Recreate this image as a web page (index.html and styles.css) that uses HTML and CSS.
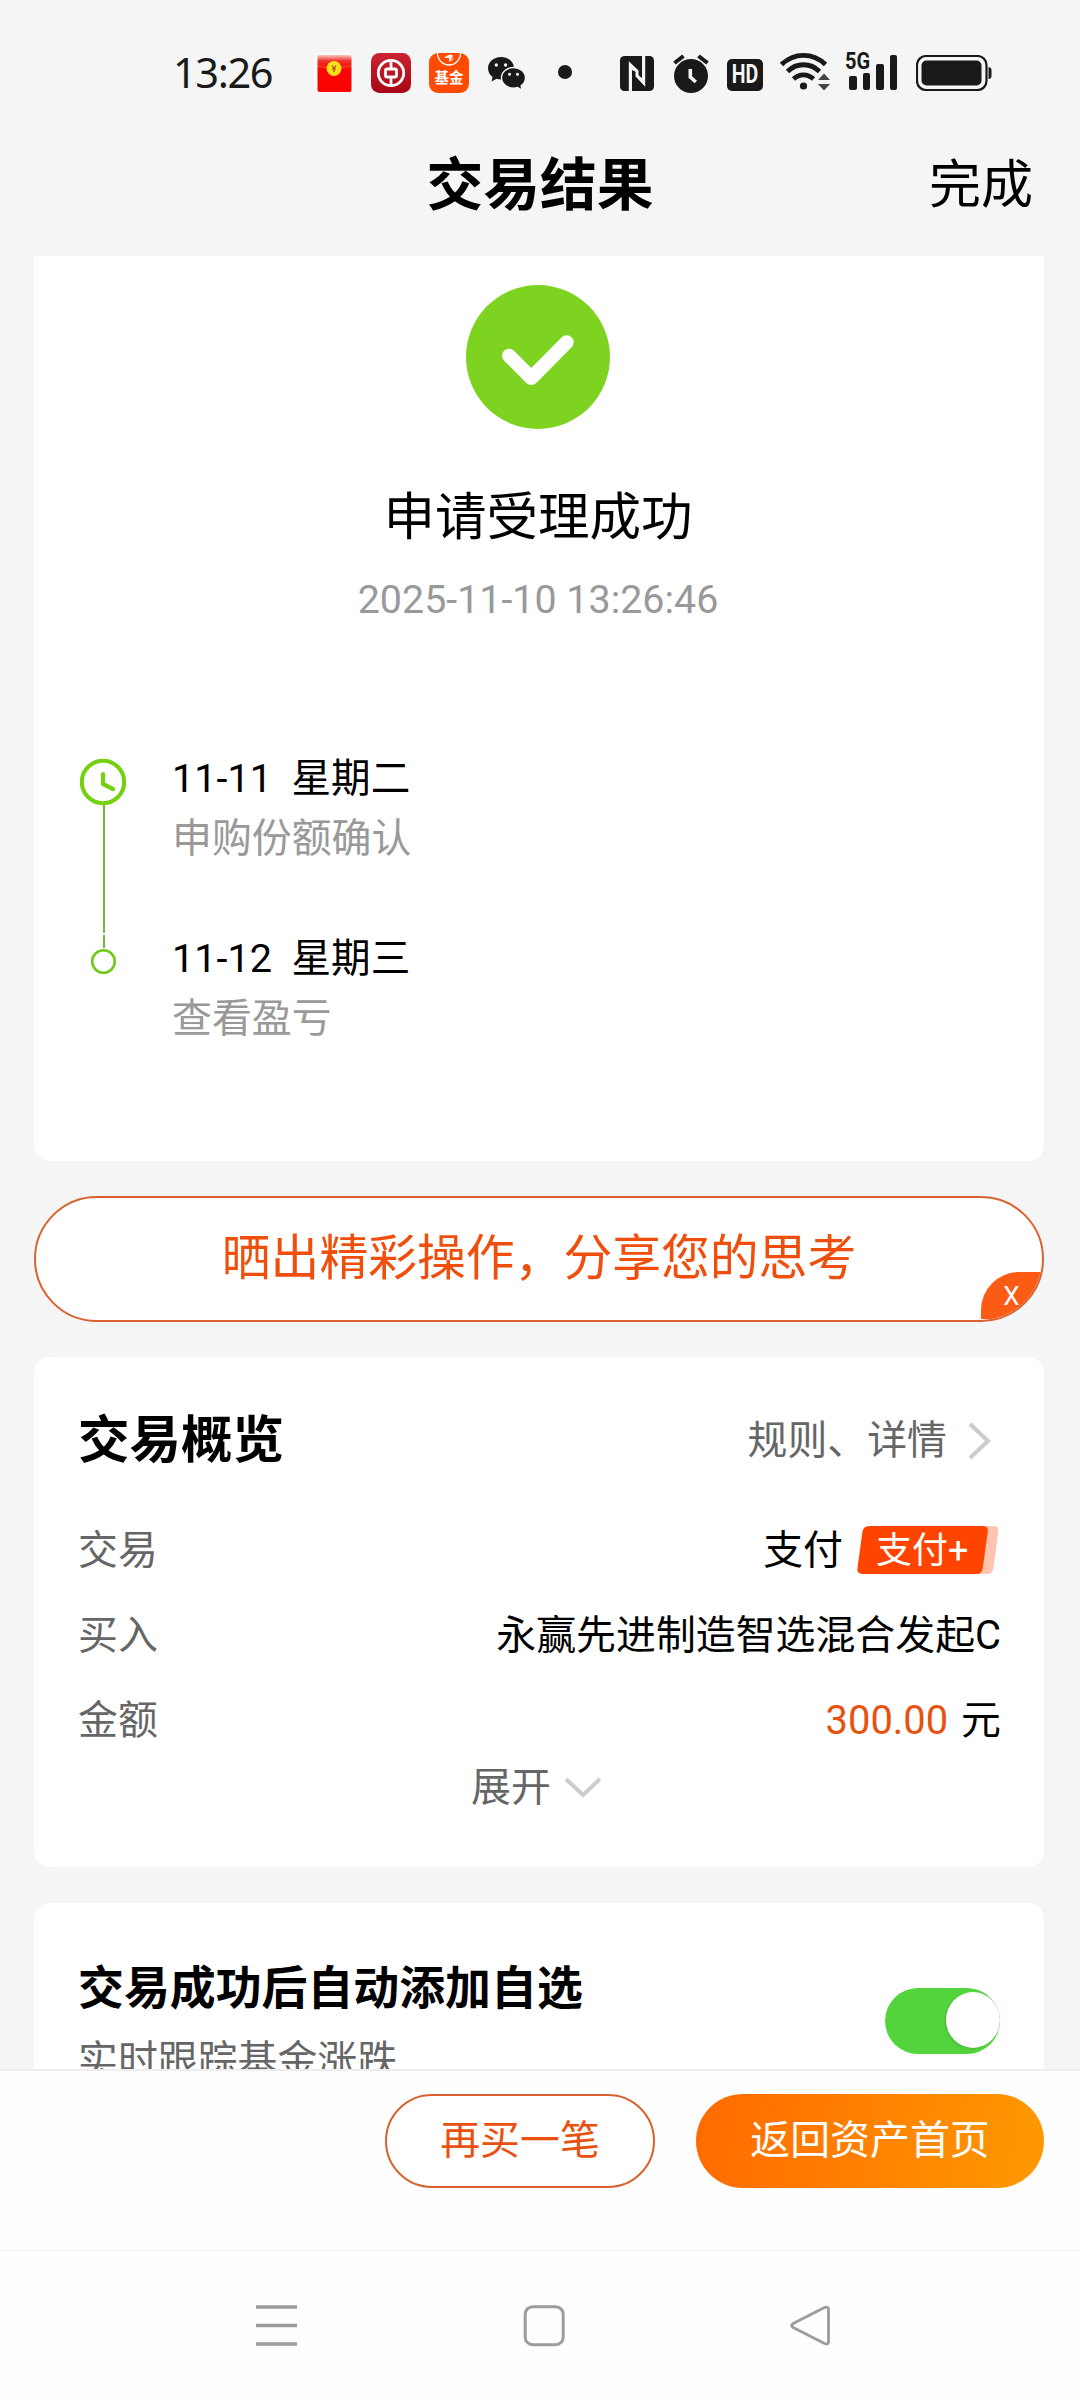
FILE: index.html
```html
<!DOCTYPE html>
<html lang="zh-CN">
<head>
<meta charset="utf-8">
<title>交易结果</title>
<link rel="stylesheet" href="styles.css">
</head>
<body>
<div class="screen">
  <div class="statusbar">
    <span class="clock">13:26</span>
    <svg class="ic-packet" width="40" height="40" viewBox="0 0 40 40"><rect width="40" height="40" rx="7" fill="#fbfbfb"/><defs><linearGradient id="pk" x1="0" y1="0" x2="0" y2="1"><stop offset="0" stop-color="#f8c9c0"/><stop offset=".16" stop-color="#f0302a"/><stop offset=".4" stop-color="#fa0404"/><stop offset="1" stop-color="#fa0404"/></linearGradient></defs><rect x="3.500" y="2" width="34" height="37" rx="2" fill="url(#pk)"/><path d="M4 13q16 4 33 0" fill="none" stroke="#e06a20" stroke-width=".8"/><circle cx="20" cy="15.500" r="7.500" fill="#fbe016"/><path d="M18 12.500l2 3 2-3M20 15.500v3.500M18.300 16h3.400" fill="none" stroke="#b4501a" stroke-width="1.300"/></svg>
    <svg class="ic-bank" width="40" height="40" viewBox="0 0 40 40"><defs><linearGradient id="bk" x1="0" y1="0" x2="0" y2="1"><stop offset="0" stop-color="#cb2332"/><stop offset="1" stop-color="#a80616"/></linearGradient></defs><rect width="40" height="40" rx="8.500" fill="url(#bk)"/><g fill="none" stroke="#fff"><circle cx="20" cy="20" r="12.700" stroke-width="2.800"/><rect x="14.500" y="16" width="11" height="8" rx="1.500" stroke-width="2.800"/><path d="M20 7v9M20 24v9" stroke-width="2.800"/></g></svg>
    <div class="ic-fund"><svg width="40" height="14" viewBox="0 0 40 14"><path d="M8.500 0a11.500 12 0 0 0 23 0" fill="none" stroke="#fff" stroke-width="1.300"/><path d="M15 5q5-5 9-3-1 5-4 7l0-4zM21 9q3-1 4-5" fill="#fff" opacity=".9"/></svg><span>基金</span></div>
    <svg class="ic-wechat" width="40" height="36" viewBox="0 0 40 36"><path d="M14 1C6.500 1 1 6 1 12.300c0 3.600 1.800 6.600 4.600 8.700L4.500 25.500l5.200-2.700c1.400.4 2.800.6 4.300.6C21.500 23.400 27 18.500 27 12.200S21.500 1 14 1z" fill="#191919"/><path d="M26.500 11.500c-6.700 0-12 4.600-12 10.300s5.300 10.300 12 10.300c1.400 0 2.800-.2 4-.6l4.600 2.600-1-4.200c2.700-1.900 4.400-4.800 4.400-8.100 0-5.700-5.300-10.300-12-10.300z" fill="#191919" stroke="#f5f5f5" stroke-width="1.400"/><g fill="#f5f5f5"><circle cx="9.300" cy="9" r="1.700"/><circle cx="18.600" cy="9" r="1.700"/><circle cx="22.500" cy="18.300" r="1.500"/><circle cx="30.500" cy="18.300" r="1.500"/></g></svg>
    <i class="dot"></i>
    <svg class="ic-nfc" width="34" height="35" viewBox="0 0 34 35"><rect width="34" height="35" rx="4.500" fill="#191919"/><path d="M10.400 35V9.500l4 4.500M23.600 0v26.500l-4-4.500" fill="none" stroke="#f5f5f5" stroke-width="3.200"/><path d="M9 5.500l9.500 9V19l-6.500-6.500zM25 30l-9.500-9.500V16l7 7z" fill="#f5f5f5"/></svg>
    <svg class="ic-alarm" width="36" height="39" viewBox="0 0 36 39"><circle cx="18" cy="22" r="17" fill="#191919"/><path d="M1.500 9l9-7M34.500 9l-9-7" stroke="#191919" stroke-width="4" fill="none"/><path d="M17.300 15v8l5.500 5" fill="none" stroke="#f5f5f5" stroke-width="3.600"/></svg>
    <span class="ic-hd"><b>HD</b></span>
    <svg class="ic-wifi" width="50" height="38" viewBox="0 0 50 38"><g fill="none" stroke="#191919" stroke-width="4.800"><path d="M1.500 12.500C14 .2 33 .2 45.500 12.500"/><path d="M7.500 19.500c9-9 23-9 32 0"/><path d="M13.500 27c5.800-5.600 14.200-5.600 20 0"/></g><circle cx="23.500" cy="34" r="3.600" fill="#191919"/><path d="M38 28l6-6.500 6 6.500zM38 32h12l-6 6.500z" fill="#444"/></svg>
    <div class="ic-signal"><span>5G</span><i class="s1"></i><i class="s2"></i><i class="s3"></i><i class="s4"></i></div>
    <svg class="ic-battery" width="76" height="36" viewBox="0 0 76 36"><rect x="1" y="1" width="69.500" height="34" rx="9" fill="none" stroke="#191919" stroke-width="2.200"/><rect x="5.500" y="5.500" width="60" height="25" rx="5" fill="#191919"/><path d="M72.500 12q3 .5 3 3v6q0 2.500-3 3z" fill="#191919"/></svg>
  </div>
  <header class="header"><span></span><h1>交易结果</h1><a class="done">完成</a></header>

  <main class="content">
    <section class="card result">
      <svg class="tick" width="144" height="144" viewBox="0 0 144 144"><circle cx="72" cy="72" r="72" fill="#7ed321"/><path d="M43 70.700L65.300 93l35.400-35.700" fill="none" stroke="#fff" stroke-width="14" stroke-linecap="round" stroke-linejoin="round"/></svg>
      <h2>申请受理成功</h2>
      <time>2025-11-10 13:26:46</time>
      <div class="timeline">
        <svg class="rail" width="48" height="220" viewBox="0 0 48 220"><path d="M24 47V175M24 177v13" stroke="#79b63c" stroke-width="2"/><circle cx="23" cy="24" r="21.200" fill="none" stroke="#75d10f" stroke-width="4"/><path d="M23 16v10l10 5" fill="none" stroke="#75d10f" stroke-width="4.200" stroke-linecap="round" stroke-linejoin="round"/><circle cx="23.500" cy="203.500" r="11.300" fill="none" stroke="#71c91a" stroke-width="2.600"/></svg>
        <div class="steps">
          <div class="step"><p class="when">11-11&nbsp; 星期二</p><p class="what">申购份额确认</p></div>
          <div class="step"><p class="when">11-12&nbsp; 星期三</p><p class="what">查看盈亏</p></div>
        </div>
      </div>
    </section>

    <section class="share">晒出精彩操作，分享您的思考<span class="close">X</span></section>

    <section class="card overview">
      <div class="head"><h3>交易概览</h3><a class="more">规则、详情<svg width="24" height="40" viewBox="0 0 24 40"><path d="M2 3l18 17L2 37" fill="none" stroke="#ccc" stroke-width="4.200"/></svg></a></div>
      <div class="row"><span class="label">交易</span><span class="pay">支付<span class="badge"><svg width="142" height="48" viewBox="0 0 142 48"><path d="M20 0h116q6 0 5.400 5l-5 37q-.8 6-6.400 6H20z" fill="#ffc4b0"/><path d="M12.500 0H125q6.500 0 5.800 5.500l-5 36.500q-.8 6-6.500 6H5.500Q-.3 48 .4 42.500l5-36.500Q6.200 0 12.500 0z" fill="#ff4400"/></svg><em>支付+</em></span></span></div>
      <div class="row"><span class="label">买入</span><span>永赢先进制造智选混合发起C</span></div>
      <div class="row"><span class="label">金额</span><span><span class="amount">300.00</span> 元</span></div>
      <div class="expand">展开<svg width="38" height="22" viewBox="0 0 38 22"><path d="M2 2l17 16L36 2" fill="none" stroke="#ccc" stroke-width="4"/></svg></div>
    </section>

    <section class="card follow">
      <div><h4>交易成功后自动添加自选</h4><p>实时跟踪基金涨跌</p></div>
      <span class="toggle"><i></i></span>
    </section>
  </main>

  <footer class="actions"><a class="btn again">再买一笔</a><a class="btn home">返回资产首页</a></footer>
  <nav class="sysnav">
    <svg width="42" height="42" viewBox="0 0 42 42"><path d="M0 2h41M0 20.500h41M0 39h41" stroke="#9c9c9c" stroke-width="3.400"/></svg>
    <svg width="42" height="42" viewBox="0 0 42 42"><rect x="2.200" y="1.700" width="38" height="38" rx="7.500" fill="none" stroke="#9c9c9c" stroke-width="3"/></svg>
    <svg width="42" height="42" viewBox="0 0 42 42"><path d="M35 2.300L3.200 18.500q-3 2 0 4L35 38.700q3.500 1.200 3.500-2V4.500q0-3.200-3.500-2.200z" fill="none" stroke="#9c9c9c" stroke-width="2.800"/></svg>
  </nav>
</div>
</body>
</html>
```
FILE: styles.css
```css
* { box-sizing: border-box; margin: 0; padding: 0; }
body {
  width: 1080px; height: 2400px; overflow: hidden; background: #f5f5f5; color: #000;
  font: 39.9px/60px Roboto, "Noto Sans CJK SC", sans-serif;
}
i, em { font-style: normal; }
.screen { display: flex; flex-direction: column; height: 2400px; }

.statusbar { display: flex; align-items: flex-start; height: 112px; padding-left: 173px; color: #191919; }
.statusbar > * { flex: none; }
.clock { width: 141px; margin-top: 42px; font-family: "Noto Sans", sans-serif; font-size: 41.500px; letter-spacing: -1.400px; }
.ic-packet { margin-top: 53px; }
.ic-bank { margin: 53px 0 0 17px; }
.ic-fund { display: flex; flex-direction: column; align-items: center; width: 40px; height: 40px; margin: 53px 0 0 18px; border-radius: 9px; background: #ff4a00; color: #fff; overflow: hidden; }
.ic-fund svg { flex: none; }
.ic-fund span { font-size: 14.500px; line-height: 24px; font-weight: 700; }
.ic-wechat { margin: 56px 0 0 18px; }
.dot { width: 14px; height: 14px; margin: 65px 0 0 31px; border-radius: 50%; background: #191919; }
.ic-nfc { margin: 56px 0 0 48px; }
.ic-alarm { margin: 54px 0 0 19px; }
.ic-hd { display: flex; justify-content: center; width: 36px; height: 32px; margin: 59px 0 0 18px; border-radius: 5px; background: #191919; color: #f5f5f5; font-size: 25px; line-height: 32px; }
.ic-hd b { transform: scaleX(.78); }
.ic-wifi { margin: 52px 0 0 17px; }
.ic-signal { position: relative; display: flex; align-items: flex-end; gap: 6px; width: 54px; height: 38px; margin: 52px 0 0 15px; padding-left: 4px; }
.ic-signal span { position: absolute; left: 0; top: 0; font-size: 23px; font-weight: 700; line-height: 19px; transform: scaleX(.87); transform-origin: 0 0; background: #f5f5f5; }
.ic-signal i { width: 7.500px; border-radius: 2px; background: #191919; }
.s1 { height: 14px; } .s2 { height: 17px; } .s3 { height: 26px; } .s4 { height: 35px; }
.ic-battery { margin: 55px 0 0 17px; }

.header { display: grid; grid-template-columns: 1fr auto 1fr; align-items: center; height: 144px; padding: 3px 47px 0; line-height: 141px; }
.header h1 { font-size: 56.800px; }
.done { justify-self: end; font-size: 52px; }

.content { display: flex; flex-direction: column; gap: 35px; height: 1813px; padding: 0 36px 0 34px; overflow: hidden; }
.content > * { flex: none; }
.card { border-radius: 16px; background: #fff; }

.result { display: flex; flex-direction: column; align-items: center; height: 905px; padding: 29px 2px 0 0; border-radius: 0 0 16px 16px; }
.result h2 { margin-top: 54px; font-size: 51.500px; font-weight: 400; line-height: 70px; }
.result time { margin-top: 17px; font-size: 39.400px; line-height: 60px; color: #999; }
.timeline { display: flex; align-self: stretch; gap: 44px; margin: 119px 0 0 46px; }
.rail { margin-top: 9px; }
.steps { display: flex; flex-direction: column; gap: 60px; }
.when { font-size: 39.600px; }
.step .what { color: #999; }

.share { position: relative; height: 126px; border: 2px solid #d9622e; border-radius: 63px; background: #fff; overflow: hidden; text-align: center; font-size: 48.800px; line-height: 121px; color: #f04e0c; }
.close { position: absolute; right: 0; bottom: 1px; width: 61px; height: 47px; border-top-left-radius: 38px; background: #fb5b14; color: #fff; font-size: 26px; line-height: 49px; }

.overview { height: 510px; padding: 54px 43px 0 44px; }
.head { display: flex; justify-content: space-between; margin-bottom: 37px; }
.head h3 { font-size: 51.500px; }
.more { display: flex; align-items: center; gap: 21px; padding-right: 9px; color: #666; }
.row { display: flex; justify-content: space-between; height: 85px; line-height: 85px; }
.label { color: #666; }
.pay { display: flex; align-items: center; gap: 14px; }
.badge { position: relative; display: flex; width: 142px; height: 48px; margin: -2px 2px 0 0; }
.badge em { position: absolute; left: 19px; top: 0; font-size: 36px; line-height: 50px; color: #fff; }
.amount { margin-right: 3px; color: #e8510f; }
.expand { display: flex; justify-content: center; align-items: center; gap: 13px; height: 50px; padding-right: 6px; color: #666; }

.follow { display: flex; justify-content: space-between; align-items: flex-start; height: 210px; margin-top: 1px; padding: 55px 44px 0; }
.follow h4 { font-size: 45.900px; }
.follow p { margin-top: 13px; color: #666; }
.toggle { display: flex; justify-content: flex-end; width: 115px; height: 66px; margin-top: 30px; padding: 4px 0; border-radius: 33px; background: #53d43d; overflow: hidden; }
.toggle i { width: 54px; height: 56px; border-radius: 50%; background: #fff; box-shadow: -1px 1px 2px rgba(0, 0, 0, .15); }

.actions { display: flex; justify-content: flex-end; align-items: flex-start; gap: 41px; height: 181px; padding: 23px 36px 0; border-top: 2px solid #eee; background: #fefefe; }
.btn { height: 94px; border-radius: 47px; text-align: center; line-height: 90px; }
.again { width: 270px; border: 2px solid #d9622e; background: #fff; color: #e8510f; }
.home { width: 348px; background: linear-gradient(100deg, #ff6a00, #ff9900); color: #fff; line-height: 94px; }
.sysnav { display: flex; justify-content: space-between; flex: 1; padding: 54px 248px 0 256px; border-top: 1px solid #f0f0f0; background: #fefefe; }
```
